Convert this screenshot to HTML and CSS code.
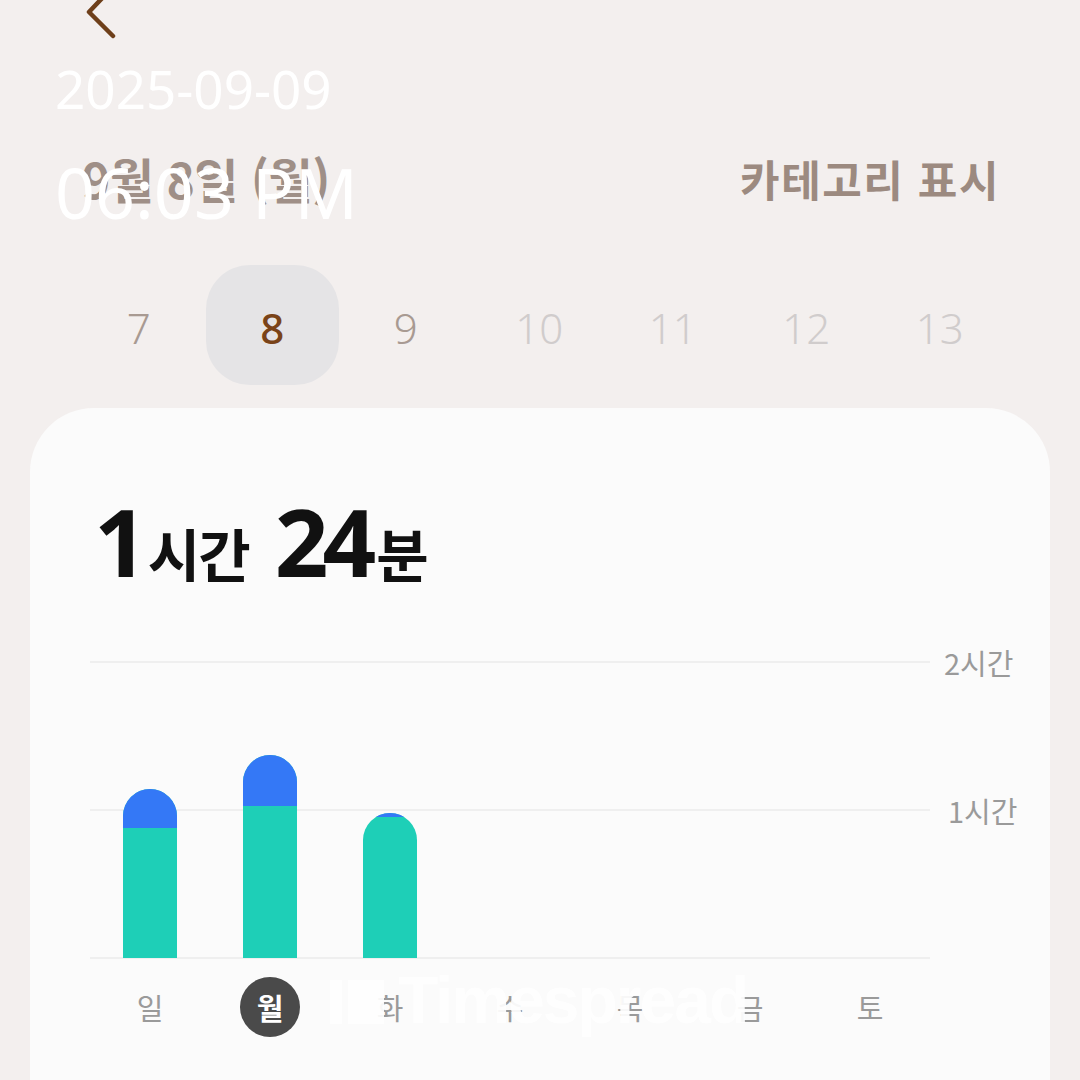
FILE: index.html
```html
<!DOCTYPE html>
<html lang="ko">
<head>
<meta charset="utf-8">
<link rel="stylesheet" href="styles.css">
</head>
<body>
<div class="screen">
  <div class="topbar">
    <svg class="back" width="44" height="48" viewBox="0 0 44 48"><path d="M26 -4 L7 16 L31 40" fill="none" stroke="#6e3f1a" stroke-width="4.5" stroke-linecap="round" stroke-linejoin="round"/></svg>
  </div>
  <div class="titlerow">
    <div class="date-title">9월 8일 (월)</div>
    <div class="cat">카테고리 표시</div>
  </div>
  <div class="days">
    <div class="day near">7</div>
    <div class="day sel">8</div>
    <div class="day near">9</div>
    <div class="day far">10</div>
    <div class="day far">11</div>
    <div class="day far">12</div>
    <div class="day far">13</div>
  </div>
  <div class="card">
    <div class="total"><span class="num">1</span><span class="unit">시간</span><span class="num">24</span><span class="unit">분</span></div>
    <div class="chart">
      <div class="plot">
        <div class="gl gl-top"></div>
        <div class="gl gl-mid"></div>
        <div class="gl gl-bot"></div>
        <div class="bars">
          <div class="col"><div class="bar" style="height:169px"><div class="blue" style="height:39px"></div></div></div>
          <div class="col"><div class="bar" style="height:203px"><div class="blue" style="height:51px"></div></div></div>
          <div class="col"><div class="bar" style="height:145px"><div class="blue" style="height:4px"></div></div></div>
          <div class="col"></div>
          <div class="col"></div>
          <div class="col"></div>
          <div class="col"></div>
        </div>
      </div>
      <div class="ylabels">
        <div class="yl yl2">2시간</div>
        <div class="yl yl1">1시간</div>
      </div>
    </div>
    <div class="xlabels">
      <div class="xl">일</div>
      <div class="xl"><span class="today">월</span></div>
      <div class="xl">화</div>
      <div class="xl">수</div>
      <div class="xl">목</div>
      <div class="xl">금</div>
      <div class="xl">토</div>
    </div>
  </div>
  <div class="stamp">
    <div class="stamp-date">2025-09-09</div>
    <div class="stamp-time">06:03 PM</div>
  </div>
  <div class="watermark"><span class="wm-icon"><span class="wm-i"></span><span class="wm-sq"></span></span>Timespread</div>
</div>
</body>
</html>
```
FILE: styles.css
```css
* { box-sizing: border-box; }
html, body { margin: 0; padding: 0; }
body {
  width: 1080px;
  height: 1080px;
  overflow: hidden;
  background: #f3efee;
  font-family: "Noto Sans CJK KR", "Noto Sans", sans-serif;
}
.screen {
  position: relative;
  width: 1080px;
  height: 1080px;
  display: flex;
  flex-direction: column;
}
.topbar {
  height: 48px;
  padding-left: 82px;
}
.back { display: block; margin-top: -4px; }
.titlerow {
  margin-top: 100px;
  height: 60px;
  display: flex;
  align-items: center;
  justify-content: space-between;
  padding: 0 80px 0 82px;
}
.date-title {
  font-size: 48px;
  font-weight: 700;
  color: #9f8f87;
  letter-spacing: -0.5px;
}
.cat {
  font-size: 43px;
  font-weight: 700;
  color: #9c8a80;
  letter-spacing: 1.5px;
}
.days {
  margin-top: 57px;
  display: grid;
  grid-template-columns: repeat(7, 133.5px);
  padding-left: 72px;
  height: 120px;
}
.day {
  display: flex;
  align-items: center;
  justify-content: center;
  font-family: "Noto Sans", sans-serif;
  font-size: 42px;
  font-weight: 300;
  padding-top: 4px;
}
.day.near { color: #a89a92; }
.day.far { color: #d0cccc; }
.day.sel {
  color: #7a4318;
  font-weight: 500;
  background: #e5e4e6;
  border-radius: 44px;
}
.card {
  margin: 23px 30px 0;
  background: #fbfbfb;
  border-radius: 64px 64px 0 0;
  flex: 1;
  padding: 93px 0 0 60px;
}
.total {
  height: 80px;
  display: flex;
  align-items: baseline;
  color: #111;
  font-weight: 700;
  padding-left: 4px;
}
.total .num {
  font-family: "Noto Sans", sans-serif;
  font-size: 94px;
  line-height: 80px;
  letter-spacing: -6px;
}
.total .unit {
  font-size: 57px;
  letter-spacing: -2px;
  margin-left: 6px;
  margin-right: 26px;
}
.total .unit:last-child { margin-right: 0; }
.chart {
  margin-top: 80px;
  display: flex;
}
.plot {
  position: relative;
  width: 840px;
  height: 298px;
}
.gl {
  position: absolute;
  left: 0;
  right: 0;
  height: 2px;
  background: #efefef;
}
.gl-top { top: 0; }
.gl-mid { top: 148px; }
.gl-bot { bottom: 0; }
.bars {
  position: relative;
  height: 297px;
  display: grid;
  grid-template-columns: repeat(7, 120px);
  align-items: end;
}
.col {
  display: flex;
  justify-content: center;
  align-items: flex-end;
  height: 100%;
}
.bar {
  width: 54px;
  background: #1ecfb7;
  border-radius: 27px 27px 0 0;
  overflow: hidden;
}
.blue { background: #3478f6; }
.ylabels {
  position: relative;
  flex: 1;
}
.yl {
  position: absolute;
  left: 14px;
  font-size: 29px;
  color: #9a9a9a;
  line-height: 30px;
}
.yl2 { top: -14px; }
.yl1 { top: 134px; left: 18px; }
.xlabels {
  display: grid;
  grid-template-columns: repeat(7, 120px);
  margin-top: 18px;
  height: 60px;
}
.xl {
  display: flex;
  align-items: center;
  justify-content: center;
  font-size: 29px;
  color: #9a9a9a;
}
.today {
  width: 60px;
  height: 60px;
  border-radius: 50%;
  background: #4a4a4a;
  color: #fff;
  display: flex;
  align-items: center;
  justify-content: center;
  font-weight: 700;
}
.stamp {
  position: absolute;
  left: 55px;
  top: 56px;
  color: #fff;
  font-family: "Noto Sans", sans-serif;
}
.stamp-date {
  font-size: 53px;
  line-height: 66px;
  font-weight: 400;
}
.stamp-time {
  font-size: 70px;
  line-height: 80px;
  margin-top: 30px;
  font-weight: 400;
}
.watermark {
  position: absolute;
  left: 330px;
  top: 962px;
  display: flex;
  align-items: center;
  color: #fff;
  font-family: "Liberation Sans", sans-serif;
  font-weight: 700;
  font-size: 66px;
  letter-spacing: -2px;
  opacity: 0.92;
}
.wm-icon {
  display: flex;
  align-items: flex-end;
  gap: 6px;
  margin-right: 14px;
  height: 48px;
}
.wm-i { width: 12px; height: 44px; background: #fff; }
.wm-sq { width: 36px; height: 44px; background: #fff; }
```
